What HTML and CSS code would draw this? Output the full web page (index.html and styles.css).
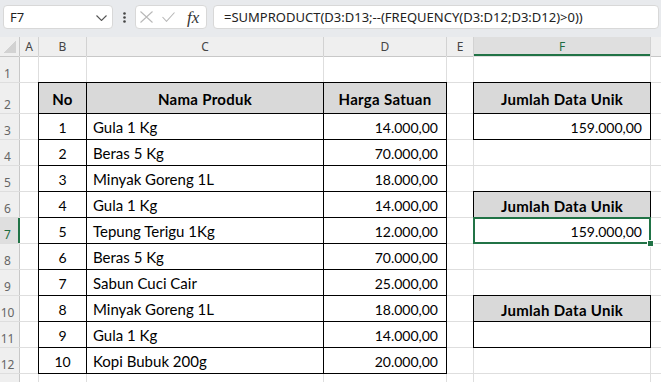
FILE: index.html
```html
<!DOCTYPE html>
<html lang="id">
<head>
<meta charset="utf-8">
<title>Jumlah Data Unik</title>
<link rel="stylesheet" href="styles.css">
</head>
<body>
<div class="app">
  <div class="toolbar">
    <div class="namebox">
      <span class="ref">F7</span>
      <svg class="chev" width="11" height="6" viewBox="0 0 11 6"><path d="M0.5 0.5 L5.5 5.5 L10.5 0.5" fill="none" stroke="#555" stroke-width="1.1"/></svg>
    </div>
    <div class="dots">
      <svg width="3" height="11" viewBox="0 0 3 11"><circle cx="1.5" cy="1.5" r="1.3" fill="#444"/><circle cx="1.5" cy="5.5" r="1.3" fill="#444"/><circle cx="1.5" cy="9.5" r="1.3" fill="#444"/></svg>
    </div>
    <div class="fxbox">
      <svg class="ico-x" width="13" height="12" viewBox="0 0 13 12"><path d="M0.5 0.5 L12.5 11.5 M12.5 0.5 L0.5 11.5" fill="none" stroke="#b8b8b8" stroke-width="1.1"/></svg>
      <svg class="ico-ok" width="13" height="10" viewBox="0 0 13 10"><path d="M0.5 5 L4.5 9.3 L12.5 0.5" fill="none" stroke="#b8b8b8" stroke-width="1.1"/></svg>
      <span class="fx">fx</span>
    </div>
    <div class="formula">=SUMPRODUCT(D3:D13;--(FREQUENCY(D3:D12;D3:D12)&gt;0))</div>
  </div>

  <div class="sheet">
    <div class="tbl prod">
      <div class="th">No</div><div class="th">Nama Produk</div><div class="th">Harga Satuan</div>
      <div class="td num">1</div><div class="td">Gula 1 Kg</div><div class="td price">14.000,00</div>
      <div class="td num">2</div><div class="td">Beras 5 Kg</div><div class="td price">70.000,00</div>
      <div class="td num">3</div><div class="td">Minyak Goreng 1L</div><div class="td price">18.000,00</div>
      <div class="td num">4</div><div class="td">Gula 1 Kg</div><div class="td price">14.000,00</div>
      <div class="td num">5</div><div class="td">Tepung Terigu 1Kg</div><div class="td price">12.000,00</div>
      <div class="td num">6</div><div class="td">Beras 5 Kg</div><div class="td price">70.000,00</div>
      <div class="td num">7</div><div class="td">Sabun Cuci Cair</div><div class="td price">25.000,00</div>
      <div class="td num">8</div><div class="td">Minyak Goreng 1L</div><div class="td price">18.000,00</div>
      <div class="td num">9</div><div class="td">Gula 1 Kg</div><div class="td price">14.000,00</div>
      <div class="td num">10</div><div class="td">Kopi Bubuk 200g</div><div class="td price">20.000,00</div>
    </div>
    <div class="tbl box box1">
      <div class="th">Jumlah Data Unik</div>
      <div class="td price">159.000,00</div>
    </div>
    <div class="tbl box box2">
      <div class="th">Jumlah Data Unik</div>
      <div class="td price active">159.000,00</div>
    </div>
    <div class="tbl box box3">
      <div class="th">Jumlah Data Unik</div>
      <div class="td"></div>
    </div>

    <!-- header row -->
    <div class="corner"><i class="tri"></i></div>
    <div class="colh">A</div><div class="colh">B</div><div class="colh">C</div><div class="colh">D</div><div class="colh">E</div><div class="colh sel">F</div><div class="colh"></div>
    <!-- row 1 -->
    <div class="rowh">1</div><div class="c"></div><div class="c"></div><div class="c"></div><div class="c"></div><div class="c"></div><div class="c"></div><div class="c"></div>
    <!-- row 2 -->
    <div class="rowh">2</div><div class="c"></div><div class="c"></div><div class="c"></div>
    <!-- row 3 -->
    <div class="rowh">3</div><div class="c"></div><div class="c"></div><div class="c"></div>
    <!-- row 4 -->
    <div class="rowh">4</div><div class="c"></div><div class="c"></div><div class="c"></div><div class="c"></div>
    <!-- row 5 -->
    <div class="rowh">5</div><div class="c"></div><div class="c"></div><div class="c"></div><div class="c"></div>
    <!-- row 6 -->
    <div class="rowh">6</div><div class="c"></div><div class="c"></div><div class="c"></div>
    <!-- row 7 -->
    <div class="rowh sel">7</div><div class="c"></div><div class="c"></div><div class="c"></div>
    <!-- row 8 -->
    <div class="rowh">8</div><div class="c"></div><div class="c"></div><div class="c"></div><div class="c"></div>
    <!-- row 9 -->
    <div class="rowh">9</div><div class="c"></div><div class="c"></div><div class="c"></div><div class="c"></div>
    <!-- row 10 -->
    <div class="rowh">10</div><div class="c"></div><div class="c"></div><div class="c"></div>
    <!-- row 11 -->
    <div class="rowh">11</div><div class="c"></div><div class="c"></div><div class="c"></div>
    <!-- row 12 -->
    <div class="rowh">12</div><div class="c"></div><div class="c"></div><div class="c"></div><div class="c"></div>
    <!-- row 13 -->
    <div class="rowh"></div><div class="c"></div><div class="c"></div><div class="c"></div><div class="c"></div><div class="c"></div><div class="c"></div><div class="c"></div>
  </div>
</div>
</body>
</html>
```

FILE: styles.css
```css
* { box-sizing: border-box; }
html, body { margin: 0; padding: 0; }
body {
  background: #fff;
  font-family: "Noto Sans", "Liberation Sans", sans-serif;
}
.app {
  width: 661px;
  height: 382px;
  overflow: hidden;
  display: flex;
  flex-direction: column;
}

/* ---------- formula bar ---------- */
.toolbar {
  flex: none;
  height: 37px;
  background: #e8eaed;
  display: flex;
  align-items: flex-start;
  padding: 5px 0 0 3px;
}
.namebox {
  width: 110px;
  height: 24px;
  background: #fff;
  border: 1px solid #d8d8d8;
  border-radius: 4px;
  display: flex;
  align-items: center;
  justify-content: space-between;
  padding: 0 5px 0 6px;
  font-size: 13px;
  color: #222;
}
.chev { margin-top: 1px; }
.dots {
  width: 22px;
  height: 24px;
  display: flex;
  align-items: center;
  justify-content: center;
}
.fxbox {
  width: 72px;
  height: 24px;
  background: #fff;
  border: 1px solid #d8d8d8;
  border-radius: 4px;
  display: flex;
  align-items: center;
  padding-left: 4px;
}
.ico-ok { margin-left: 9px; }
.fx {
  margin-left: 12px;
  font-family: "Liberation Serif", serif;
  font-style: italic;
  font-size: 17px;
  line-height: 1;
  color: #333;
}
.formula {
  margin-left: 6px;
  width: 446px;
  height: 24px;
  background: #fff;
  border: 1px solid #d8d8d8;
  border-radius: 4px;
  display: flex;
  align-items: center;
  padding-left: 10px;
  font-size: 13px;
  color: #222;
  white-space: nowrap;
  overflow: hidden;
}

/* ---------- sheet grid ---------- */
.sheet {
  flex: 1;
  display: grid;
  grid-template-columns: 19px 18px 47px 236px 122px 26px 176px 1fr;
  grid-template-rows: 19px 25px 30px repeat(10, 25px) 1fr;
  gap: 1px;
  background: #dedede;
}
.c { background: #fff; }

.corner {
  background: #efefef;
  display: flex;
  align-items: flex-end;
  justify-content: flex-end;
  padding: 0 3px 3px 0;
  box-shadow: 1px 0 0 #c8c8c8, 0 1px 0 #c8c8c8;
}
.tri {
  display: block;
  width: 12px;
  height: 12px;
  background: linear-gradient(to bottom right, transparent 50%, #d2d2d2 50%);
}
.colh {
  background: #efefef;
  display: flex;
  align-items: center;
  justify-content: center;
  font-size: 12px;
  color: #444;
  box-shadow: 1px 0 0 #d2d2d2, 0 1px 0 #c8c8c8;
}
.colh.sel {
  background: #dfdfdf;
  color: #1e6b41;
  box-shadow: inset 0 -2px 0 #217346, 1px 0 0 #d2d2d2;
}
.rowh {
  background: #efefef;
  display: flex;
  align-items: flex-end;
  justify-content: center;
  padding: 0 4px 2px 0;
  font-size: 12px;
  line-height: 12px;
  color: #666;
  box-shadow: 1px 0 0 #c8c8c8;
}
.rowh.sel {
  background: #dfdfdf;
  color: #1e6b41;
  box-shadow: inset -1px 0 0 #217346, 1px 0 0 #217346;
}

/* ---------- bordered tables ---------- */
.tbl {
  margin: -1px;
  display: grid;
  gap: 1px;
  padding: 1px;
  background: #000;
  font-family: Lato, "Liberation Sans", sans-serif;
  font-size: 15px;
  color: #000;
}
.prod {
  grid-column: 3 / 6;
  grid-row: 3 / 14;
  grid-template-columns: 47px 236px 122px;
  grid-template-rows: 30px repeat(10, 25px);
}
.box { grid-column: 7; grid-template-columns: 176px; }
.box1 { grid-row: 3 / 5; grid-template-rows: 30px 25px; }
.box2 { grid-row: 7 / 9; grid-template-rows: 25px 25px; }
.box3 { grid-row: 11 / 13; grid-template-rows: 25px 25px; }

.th {
  background: #d9d9d9;
  font-weight: 700;
  letter-spacing: 0.3px;
  display: flex;
  align-items: center;
  justify-content: center;
  padding-top: 2px;
}
.td {
  background: #fff;
  display: flex;
  align-items: center;
  padding: 1px 6px 0;
  white-space: nowrap;
}
.td.num { justify-content: center; padding: 1px 0 0; font-size: 14px; }
.td.price { justify-content: flex-end; padding-right: 8px; font-size: 14px; }
.td.active {
  position: relative;
  z-index: 1;
  outline: 2px solid #217346;
  outline-offset: -1px;
}
.td.active::after {
  content: "";
  position: absolute;
  right: -3px;
  bottom: -3px;
  width: 5px;
  height: 5px;
  background: #217346;
  box-shadow: 0 0 0 1px #fff;
}
```
